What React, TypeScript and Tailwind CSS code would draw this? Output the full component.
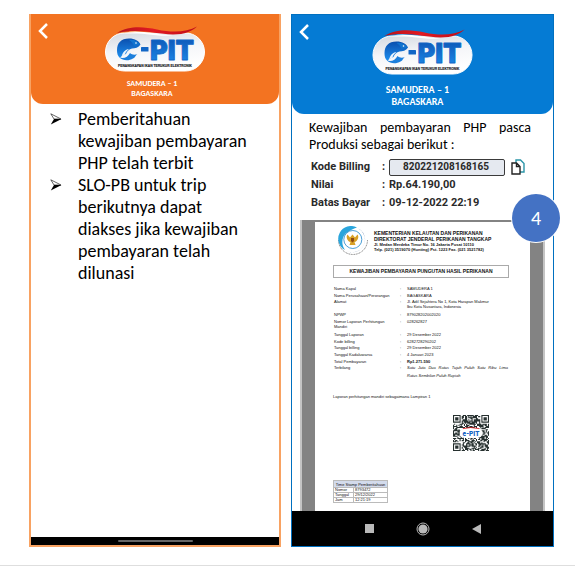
import { useId, type ReactNode } from "react";

function Logo({ className }: { className: string }) {
  const id = useId();
  return (
    <svg viewBox="0 0 100 46" className={className} role="img" aria-label="e-PIT">
      <defs>
        <linearGradient id={id + "p"} x1="0" y1="0" x2="0.3" y2="1">
          <stop offset="0" stopColor="#d3d8e0" />
          <stop offset="0.5" stopColor="#f4f5f8" />
          <stop offset="1" stopColor="#fff" />
        </linearGradient>
        <linearGradient id={id + "b"} x1="0" y1="0" x2="0" y2="1">
          <stop offset="0" stopColor="#0b4fae" />
          <stop offset="1" stopColor="#1e90f0" />
        </linearGradient>
        <linearGradient id={id + "r"} x1="0" y1="0" x2="1" y2="0">
          <stop offset="0" stopColor="#b5121b" />
          <stop offset="0.45" stopColor="#e21a22" />
          <stop offset="1" stopColor="#c00d18" />
        </linearGradient>
      </defs>
      <rect x="0.5" y="7" width="99" height="38" rx="19" fill={`url(#${id}p)`} stroke="#fff" />
      <path d="M12 7C24 -.5 38 .5 52 3.500 68 7 82 6 92 .5 87 5 80 8.500 68 8.500 50 8.500 36 2 12 7Z" fill={`url(#${id}r)`} />
      <path d="M20 6.500C36 3.500 50 9 68 9.500 50 11 36 6 20 6.500Z" fill="#fff" />
      <path d="M12 24C12 17 16 12.500 24 12.500 30 12.500 34 15 35.500 18.500 33.500 21.500 30 22.500 27 22.500 24 23.500 22 25 21 28 18 29 16 30 15 32 12.500 30 12 27 12 24Z" fill={`url(#${id}b)`} />
      <path d="M24 14C28 13 33 15 35 18.500L29 20C28 17 26 15 24 14Z" fill="#1173cf" />
      <circle cx="31" cy="17" r=".8" fill="#fff" />
      <path d="M14.500 31.500C19 33 23 31 25 27 27 29 30 29 32.500 28 30 29.500 31 31 28 32.500 24 35 18 35 14.500 31.500Z" fill="#1c7fdc" />
      <path d="M24 23C20 23.500 18 26 16.500 30.500L20 28.500C20.500 26 22 24.500 24 23Z" fill="#eaf4fd" />
      <text fontFamily="Inter, Roboto, sans-serif" fontWeight="900" fontSize="27" fill={`url(#${id}b)`} stroke="#1266c6" strokeWidth=".8" strokeLinejoin="round">
        <tspan x="45" y="33.500">PIT</tspan>
      </text>
      <rect x="36" y="21" width="7.500" height="4.500" rx=".6" fill="#1266c6" />
      <text x="50" y="40.500" textAnchor="middle" fontFamily="'Liberation Sans', sans-serif" fontWeight="700" fontSize="3.300" fill="#1d1d26" stroke="#1d1d26" strokeWidth=".15">
        PENANGKAPAN IKAN TERUKUR ELEKTRONIK
      </text>
    </svg>
  );
}

function BackButton() {
  return (
    <button type="button" aria-label="Kembali" className="absolute left-[6px] top-2 text-white">
      <svg viewBox="0 0 12 18" className="h-[18px] w-3" fill="none" stroke="currentColor" strokeWidth="2.500">
        <path d="M10 2 3 9l7 7" />
      </svg>
    </button>
  );
}

function Bullet({ children }: { children: ReactNode }) {
  return (
    <li className="flex gap-4">
      <svg viewBox="0 0 12 12" className="mt-[5px] h-3 w-3 shrink-0">
        <path d="M.800 .800 11 6 4 6Z" fill="#fff" stroke="#222" strokeWidth=".7" />
        <path d="M4 6H11.500L.800 11.500Z" fill="#000" />
      </svg>
      <span>{children}</span>
    </li>
  );
}

function Emblem() {
  return (
    <svg viewBox="0 0 32 30" className="h-[30px] w-8 shrink-0" aria-hidden="true">
      <path d="M1.500 14a14.500 14.500 0 0 0 29 0" fill="none" stroke="#777" strokeWidth="1" strokeDasharray="1 .7" />
      <circle cx="16" cy="14" r="12.500" fill="#fff" />
      <path d="M20 1.500A12.500 12.500 0 0 0 8 24C3.500 18 5 10 10 6.500 13 4 16 3 20 1.500Z" fill="#2aa5dc" />
      <path d="M21 2.500A12.500 12.500 0 0 1 10 25 12.500 12.500 0 0 0 28 14 12.500 12.500 0 0 0 21 2.500Z" fill="#15407f" />
      <circle cx="15.800" cy="13.500" r="9" fill="#fff" stroke="#1f86cc" strokeWidth=".8" />
      <path d="M10.500 8.500C8.500 11 10.500 15.500 13.500 16L12.500 19H18.500L17.500 16C20.500 15.500 22.500 11 20.500 8.500L18 11.500 15.500 8.500 13 11.500Z" fill="#d9a126" />
      <path d="M14 12h3v3l-1.500 1.500L14 15Z" fill="#8e4a14" />
    </svg>
  );
}

const QR_SIZE = 33;

function isDark(x: number, y: number) {
  const corners = [
    [0, 0],
    [QR_SIZE - 7, 0],
    [0, QR_SIZE - 7],
  ];
  for (const [cx, cy] of corners) {
    const dx = x - cx;
    const dy = y - cy;
    if (dx >= -1 && dx <= 7 && dy >= -1 && dy <= 7) {
      const ring = Math.max(Math.abs(dx - 3), Math.abs(dy - 3));
      return ring === 3 || ring <= 1;
    }
  }
  const n = Math.sin(x * 12.9898 + y * 78.233) * 43758.5453;
  return n - Math.floor(n) > 0.42;
}

function QrCode() {
  const cells: string[] = [];
  for (let y = 0; y < QR_SIZE; y++)
    for (let x = 0; x < QR_SIZE; x++) if (isDark(x, y)) cells.push(`M${x} ${y}h1v1h-1z`);
  return (
    <svg viewBox="0 0 33 33" className="h-9 w-9" role="img" aria-label="Kode QR">
      <path d={cells.join("")} fill="#26302f" />
      <rect x="6" y="12" width="21" height="9" rx="4.500" fill="#fff" />
      <path d="M9 12.500q7-2 15 0" stroke="#d22" strokeWidth=".8" fill="none" />
      <text x="16.500" y="18.800" textAnchor="middle" fontFamily="Roboto, sans-serif" fontWeight="900" fontSize="6" fill="#1463c4">
        e-PIT
      </text>
    </svg>
  );
}

const details: [string, ReactNode][] = [
  ["Nama Kapal", "SAMUDERA 1"],
  ["Nama Perusahaan/Perorangan", "BAGASKARA"],
  ["Alamat", <>Jl. Adil Sejahtera No 1, Kota Harapan Makmur<br />Ibu Kota Nusantara, Indonesia</>],
  ["NPWP", "879028202002020"],
  ["Nomor Laporan Perhitungan Mandiri", "028262827"],
  ["Tanggal Laporan", "29 Desember 2022"],
  ["Kode billing", "6282728290202"],
  ["Tanggal billing", "29 Desember 2022"],
  ["Tanggal Kadaluwarsa", "4 Januari 2023"],
  ["Total Pembayaran", <b>Rp1.271.590</b>],
];

const stamps = [
  ["Nomor", "8793472"],
  ["Tanggal", "29/12/2022"],
  ["Jam", "12:21:19"],
];

function Letter() {
  return (
    <article className="mx-[13px] mt-[2px] flex-1 bg-white px-[18px] pt-[4px] font-['Liberation_Sans',Arial,sans-serif] text-[4px] leading-[5px] text-[#111]">
      <header className="flex gap-[5px] pl-1">
        <Emblem />
        <div className="whitespace-nowrap pt-1 font-bold">
          <p className="text-[5px] leading-[6px]">KEMENTERIAN KELAUTAN DAN PERIKANAN</p>
          <p className="text-[5px] leading-[6px]">DIREKTORAT JENDERAL PERIKANAN TANGKAP</p>
          <p>Jl. Medan Merdeka Timur No. 16 Jakarta Pusat 10110</p>
          <p>Telp. (021) 3519070 (Hunting) Pst. 1223 Fax. (021 3521782)</p>
        </div>
      </header>
      <h2 className="mt-[9px] mr-[3px] border border-[#aaa] py-[2px] text-center text-[5px] leading-[7px] font-bold whitespace-nowrap">
        KEWAJIBAN PEMBAYARAN PUNGUTAN HASIL PERIKANAN
      </h2>
      <table className="ml-px mt-[8px] h-[99px] w-[174px] table-fixed">
        <tbody className="align-top">
          {details.map(([label, value]) => (
            <tr key={label}>
              <th scope="row" className="w-[66px] pr-1 text-left font-normal">{label}</th>
              <td className="w-[7px]">:</td>
              <td className="whitespace-nowrap">{value}</td>
            </tr>
          ))}
          <tr>
            <th scope="row" className="text-left font-normal">Terbilang</th>
            <td>:</td>
            <td className="italic leading-[8px]">
              <div className="-mt-px">
                <span className="block [text-align-last:justify]">Satu Juta Dua Ratus Tujuh Puluh Satu Ribu Lima</span>
                Ratus Sembilan Puluh Rupiah
              </div>
            </td>
          </tr>
        </tbody>
      </table>
      <p className="mt-[9px]">Laporan perhitungan mandiri sebagaimana Lampiran 1</p>
      <div className="mt-4 flex justify-end pr-[23px]">
        <QrCode />
      </div>
      <table className="mt-[29px] w-[55px] border-collapse text-[4px]">
        <thead>
          <tr>
            <th colSpan={2} className="h-[7px] whitespace-nowrap border border-[#bbb] bg-[#d3dbec] p-0 text-center font-normal">
              Time Stamp Pemberitahuan
            </th>
          </tr>
        </thead>
        <tbody>
          {stamps.map(([k, v]) => (
            <tr key={k} className="leading-[4px]">
              <th scope="row" className="w-5 border border-[#bbb] p-0 pl-px text-left font-normal">{k}</th>
              <td className="border border-[#bbb] p-0 pl-px">{v}</td>
            </tr>
          ))}
        </tbody>
      </table>
    </article>
  );
}

export default function App() {
  return (
    <div className="border-b-2 border-[#dedede] bg-white font-[Carlito,Lato,sans-serif] text-black">
      <main className="grid grid-cols-[minmax(0,252fr)_minmax(0,263fr)] gap-[10px] pb-[18px] pl-[29px] pr-[21px] pt-[14px]">
        <section className="flex min-h-[533px] flex-col border-2 border-t-0 border-[#f8a262] bg-white">
          <header className="relative flex flex-col items-center rounded-b-xl bg-[#f37321] pb-[6px] pt-[12px] text-center text-white">
            <BackButton />
            <Logo className="h-[46px] w-[100px]" />
            <h1 className="mt-[6px] pr-[6px] text-[8px] leading-[10px] font-bold">
              SAMUDERA – 1<br />BAGASKARA
            </h1>
          </header>
          <ul className="flex-1 px-[19px] pt-[4px] text-[18px] leading-[22px]">
            <Bullet>Pemberitahuan<br />kewajiban pembayaran<br />PHP telah terbit</Bullet>
            <Bullet>SLO-PB untuk trip<br />berikutnya dapat<br />diakses jika kewajiban<br />pembayaran telah<br />dilunasi</Bullet>
          </ul>
          <footer className="flex h-2 items-center justify-center bg-black">
            <div className="h-[2px] w-[75px] rounded-full bg-[#666]" />
          </footer>
        </section>

        <section className="relative flex min-h-[533px] flex-col border border-[#0070c0] bg-white">
          <header className="relative flex flex-col items-center rounded-b-xl bg-[#057bd4] pb-[6px] pt-[14px] text-center text-white">
            <BackButton />
            <Logo className="h-[46px] w-[101px]" />
            <h1 className="mt-[9px] pr-[10px] text-[10px] leading-[12px] font-bold">
              SAMUDERA – 1<br />BAGASKARA
            </h1>
          </header>
          <p className="pl-[17px] pr-[22px] pt-[5px] text-justify text-[14px] leading-[17px]">
            Kewajiban pembayaran PHP pasca Produksi sebagai berikut :
          </p>
          <div className="mt-[5px] grid grid-cols-[71px_7px_1fr] items-center pl-[19px] pr-[27px] font-[Roboto,sans-serif] text-[11px] leading-[18px] font-bold text-[#2a2a2a]">
            <label htmlFor="billing">Kode Billing</label>
            <span>:</span>
            <div className="flex items-center gap-[6px]">
              <input id="billing" readOnly value="820221208168165" className="h-[17px] w-[116px] rounded-[2px] border border-[#3a3a3a] bg-[#e5e9f0] pl-[13px] text-[10px]" />
              <button type="button" aria-label="Salin kode billing">
                <svg viewBox="0 0 14 16" className="h-4 w-[14px]" fill="#fff" strokeWidth="1.400">
                  <path d="M5 12V1h4.500L13 4.500V13H6" stroke="#2b95a8" />
                  <path d="M1 4h4.500L9 7.500V15H1ZM5.500 4v3.500H9" stroke="#222" />
                </svg>
              </button>
            </div>
            <span>Nilai</span>
            <span>:</span>
            <span>Rp.64.190,00</span>
            <span className="whitespace-nowrap">Batas Bayar</span>
            <span>:</span>
            <span>09-12-2022 22:19</span>
          </div>
          <div className="mx-[8px] mt-[8px] flex flex-1 flex-col border-x-2 border-[#c4c4c4] bg-[#838383]">
            <Letter />
          </div>
          <nav className="flex h-[35px] items-center justify-center gap-[42px] bg-black text-[#b9b9b9]">
            <button type="button" aria-label="Aplikasi terbaru" className="h-[9px] w-[9px] bg-[#b9b9b9]" />
            <button type="button" aria-label="Beranda">
              <svg viewBox="0 0 14 14" className="h-[14px] w-[14px]" fill="currentColor">
                <circle cx="7" cy="7" r="4.600" />
                <circle cx="7" cy="7" r="6" fill="none" stroke="currentColor" />
              </svg>
            </button>
            <button type="button" aria-label="Kembali">
              <svg viewBox="0 0 9 10" className="h-[10px] w-[9px]" fill="currentColor">
                <path d="M0 5 9 0v10Z" />
              </svg>
            </button>
          </nav>
          <div className="absolute -right-[7px] top-[179px] flex h-12 w-12 items-center justify-center rounded-full bg-[#4472c4] text-[20px] text-white ring-1 ring-white">
            4
          </div>
        </section>
      </main>
    </div>
  );
}
